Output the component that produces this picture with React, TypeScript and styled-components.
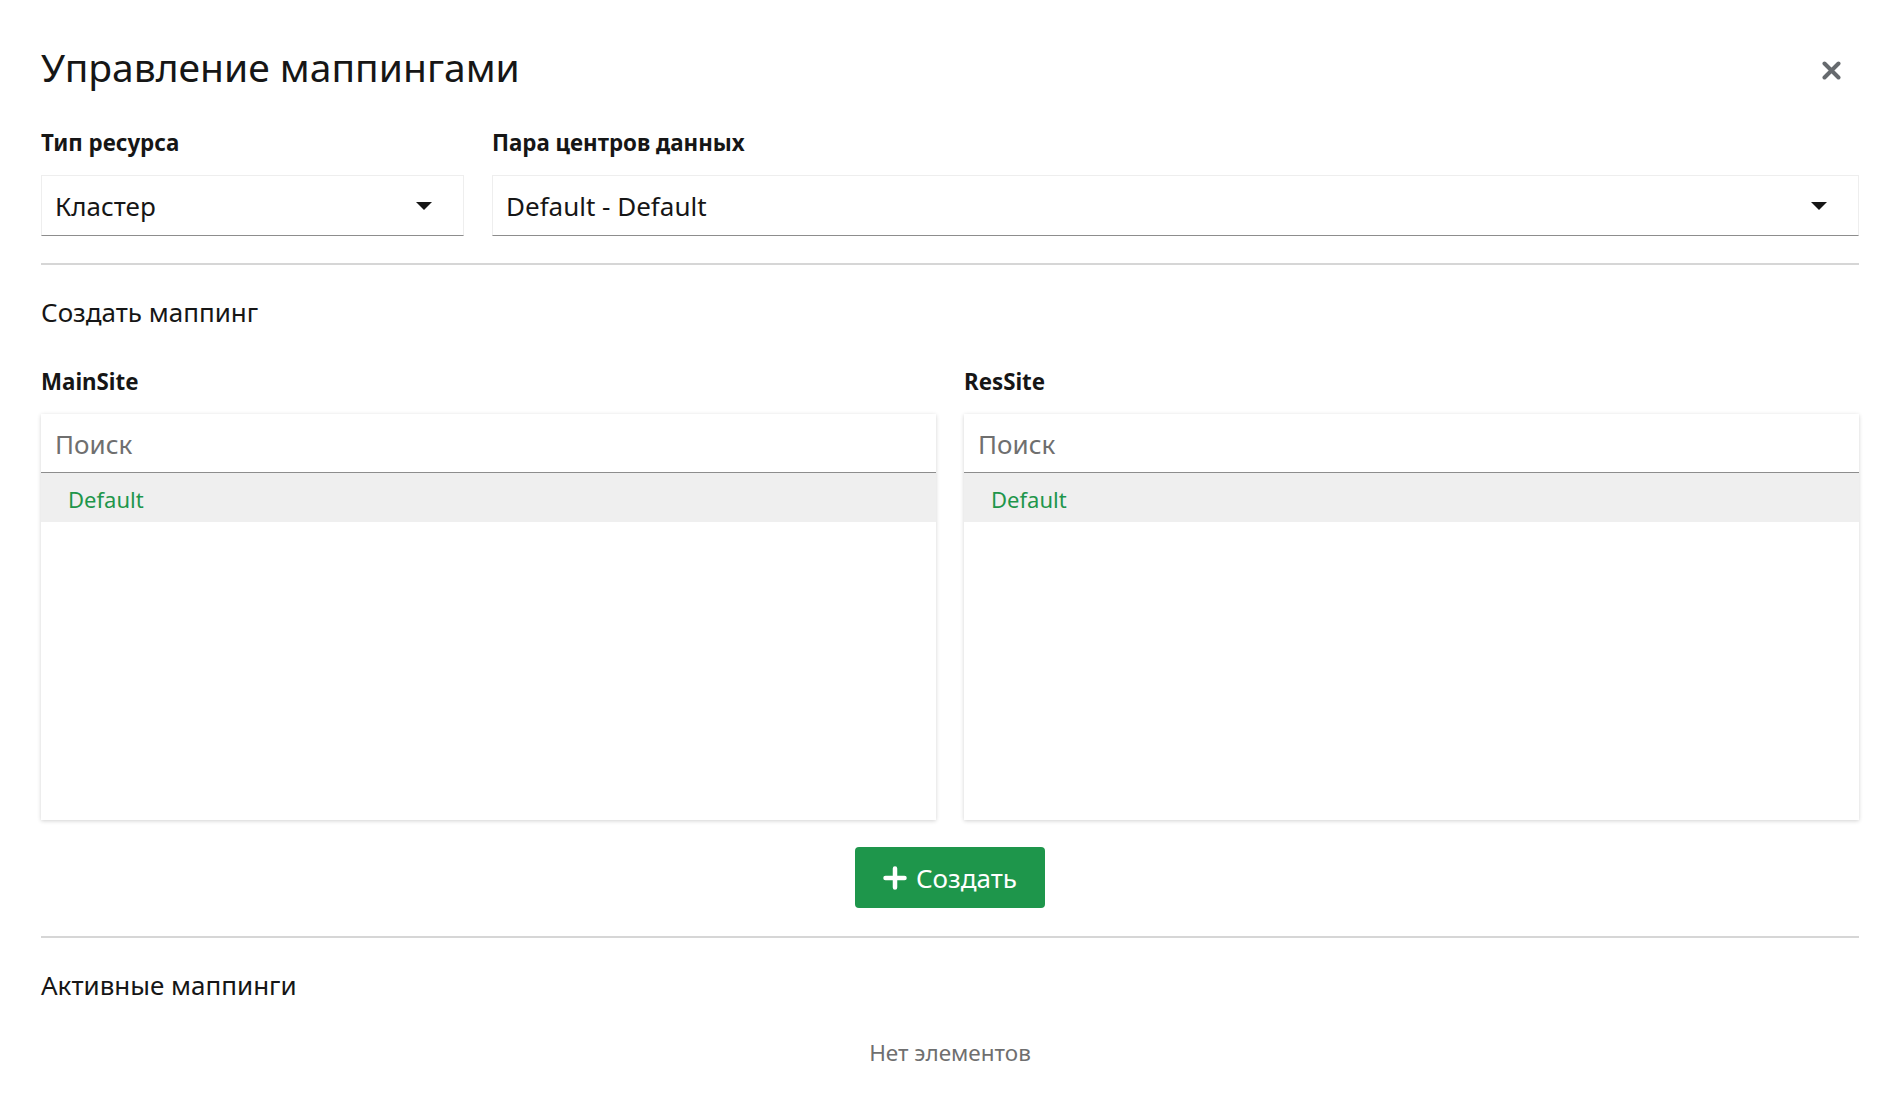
import React from "react";
import styled, { createGlobalStyle } from "styled-components";

const GlobalStyle = createGlobalStyle`
  html, body {
    margin: 0;
    padding: 0;
    background: #ffffff;
  }
  body {
    font-family: "Noto Sans", "Open Sans", sans-serif;
    color: #161616;
  }
  * {
    box-sizing: border-box;
  }
`;

const Modal = styled.div`
  width: 100%;
  min-height: 1115px;
  padding: 44px 39px 40px 41px;
  display: flex;
  flex-direction: column;
`;

const Header = styled.header`
  display: flex;
  justify-content: space-between;
  align-items: center;
`;

const Title = styled.h1`
  margin: 0;
  font-size: 39px;
  line-height: 46px;
  font-weight: 400;
  color: #161616;
`;

const CloseButton = styled.button`
  margin-top: 6px;
  margin-right: 18px;
  padding: 0;
  width: 19px;
  height: 19px;
  border: 0;
  background: transparent;
  display: flex;
  cursor: pointer;
`;

const FieldRow = styled.div`
  margin-top: 38px;
  display: grid;
  grid-template-columns: 423px 1fr;
  gap: 28px;
`;

const Field = styled.div`
  display: flex;
  flex-direction: column;
`;

const Label = styled.label`
  font-size: 22.3px;
  line-height: 30px;
  font-weight: 700;
  margin-bottom: 17px;
`;

const Select = styled.div`
  height: 61px;
  display: flex;
  align-items: center;
  justify-content: space-between;
  padding: 0 31px 0 13px;
  border: 1px solid #eeeeee;
  border-bottom: 1px solid #8d8d8d;
  font-size: 26px;
  line-height: 32px;
`;

const Divider = styled.hr<{ $top: number }>`
  margin: ${(p) => p.$top}px 0 0;
  border: 0;
  height: 2px;
  background: #d6d6d6;
`;

const SectionTitle = styled.h2`
  margin: 31px 0 0;
  font-size: 26px;
  line-height: 32px;
  font-weight: 400;
`;

const Columns = styled.div`
  margin-top: 39px;
  display: grid;
  grid-template-columns: 1fr 1fr;
  gap: 28px;
`;

const ListBox = styled.div`
  height: 406px;
  background: #ffffff;
  box-shadow: 0 1px 4px rgba(0, 0, 0, 0.18);
  display: flex;
  flex-direction: column;
`;

const Search = styled.div`
  height: 59px;
  display: flex;
  align-items: center;
  padding: 2px 0 0 14px;
  border-bottom: 1px solid #8d8d8d;
  font-size: 26px;
  color: #6f6f6f;
`;

const ListItem = styled.div<{ $selected?: boolean }>`
  height: 49px;
  display: flex;
  align-items: center;
  padding: 2px 0 0 27px;
  font-size: 22px;
  color: #1e964b;
  background: ${(p) => (p.$selected ? "#efefef" : "transparent")};
`;

const Actions = styled.div`
  margin-top: 27px;
  display: flex;
  justify-content: center;
`;

const CreateButton = styled.button`
  width: 190px;
  height: 61px;
  border: 0;
  border-radius: 4px;
  background: #1e964b;
  color: #ffffff;
  font-family: inherit;
  font-size: 26px;
  display: flex;
  align-items: center;
  justify-content: center;
  gap: 9px;
  cursor: pointer;
`;

const Empty = styled.div`
  margin-top: 38px;
  text-align: center;
  font-size: 22.5px;
  line-height: 28px;
  color: #6f6f6f;
`;

const Caret = () => (
  <svg width="16" height="8" viewBox="0 0 16 8">
    <path d="M0 0 H16 L8 8 Z" fill="#161616" />
  </svg>
);

const CloseIcon = () => (
  <svg width="19" height="19" viewBox="0 0 19 19">
    <path
      d="M2.5 2.5 L16.5 16.5 M16.5 2.5 L2.5 16.5"
      stroke="#666a6e"
      strokeWidth="4"
      strokeLinecap="round"
    />
  </svg>
);

const PlusIcon = () => (
  <svg width="24" height="24" viewBox="0 0 24 24">
    <path
      d="M12 2.5 V21.5 M2.5 12 H21.5"
      stroke="#ffffff"
      strokeWidth="4.5"
      strokeLinecap="round"
    />
  </svg>
);

const SiteList = ({ title }: { title: string }) => (
  <Field>
    <Label>{title}</Label>
    <ListBox>
      <Search>Поиск</Search>
      <ListItem $selected>Default</ListItem>
    </ListBox>
  </Field>
);

const App = () => {
  return (
    <>
      <GlobalStyle />
      <Modal>
        <Header>
          <Title>Управление маппингами</Title>
          <CloseButton aria-label="Закрыть">
            <CloseIcon />
          </CloseButton>
        </Header>

        <FieldRow>
          <Field>
            <Label>Тип ресурса</Label>
            <Select>
              <span>Кластер</span>
              <Caret />
            </Select>
          </Field>
          <Field>
            <Label>Пара центров данных</Label>
            <Select>
              <span>Default - Default</span>
              <Caret />
            </Select>
          </Field>
        </FieldRow>

        <Divider $top={27} />

        <SectionTitle>Создать маппинг</SectionTitle>

        <Columns>
          <SiteList title="MainSite" />
          <SiteList title="ResSite" />
        </Columns>

        <Actions>
          <CreateButton>
            <PlusIcon />
            Создать
          </CreateButton>
        </Actions>

        <Divider $top={28} />

        <SectionTitle>Активные маппинги</SectionTitle>

        <Empty>Нет элементов</Empty>
      </Modal>
    </>
  );
};

export default App;
